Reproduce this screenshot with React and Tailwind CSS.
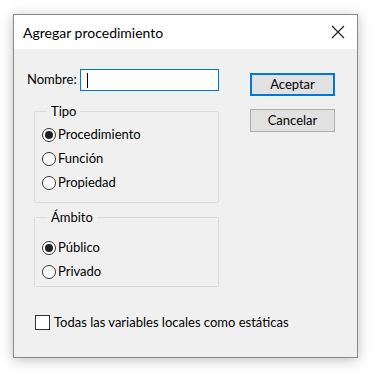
import React, { useState } from "react";

const font = { fontFamily: 'Lato, "Open Sans", sans-serif' };

function Radio({ label, checked, onSelect }) {
  return (
    <label className="flex items-center h-[24px] cursor-default" onClick={onSelect}>
      <span className="w-[14px] h-[14px] rounded-full border border-[#333] bg-white flex items-center justify-center">
        {checked && <span className="w-[8px] h-[8px] rounded-full bg-[#222]" />}
      </span>
      <span className="ml-[2px]">{label}</span>
    </label>
  );
}

function Group({ title, children, className }) {
  return (
    <fieldset className={"border border-[#dcdcdc] rounded-[2px] w-[185px] pl-[7px] " + className}>
      <legend className="ml-[5px] px-[4px] leading-[16px]">{title}</legend>
      {children}
    </fieldset>
  );
}

export default function App() {
  const [tipo, setTipo] = useState("proc");
  const [ambito, setAmbito] = useState("pub");
  const [name, setName] = useState("");

  return (
    <div className="w-[375px] h-[375px] bg-white pl-[13px] pt-[14px] text-[13px] text-black" style={font}>
      <div className="w-[345px] h-[344px] border border-[#8a8a8a] bg-[#f0f0f0] shadow-[0_2px_12px_rgba(0,0,0,0.25)] flex flex-col">
        <div className="h-[34px] bg-white flex items-center justify-between pl-[9px] pr-[10px]">
          <span className="text-[14px]">Agregar procedimiento</span>
          <svg width="14" height="14" viewBox="0 0 14 14" className="mr-[2px]">
            <path d="M1 1 L13 13 M13 1 L1 13" stroke="#222" strokeWidth="1.2" />
          </svg>
        </div>

        <div className="flex">
          <div className="flex flex-col w-[222px] pl-[13px]">
            <div className="flex items-center mt-[20px]">
              <span>Nombre:</span>
              <div className="ml-[3px] w-[139px] h-[22px] border border-[#0078d7] bg-white flex items-center pl-[6px]">
                {name === "" && <span className="w-[1px] h-[15px] bg-black shrink-0" />}
                <input
                  value={name}
                  onChange={(e) => setName(e.target.value)}
                  className="w-full outline-none bg-transparent"
                />
              </div>
            </div>

            <Group title="Tipo" className="ml-[7px] mt-[12px] h-[100px] pt-[4px]">
              <Radio label="Procedimiento" checked={tipo === "proc"} onSelect={() => setTipo("proc")} />
              <Radio label="Función" checked={tipo === "func"} onSelect={() => setTipo("func")} />
              <Radio label="Propiedad" checked={tipo === "prop"} onSelect={() => setTipo("prop")} />
            </Group>

            <Group title="Ámbito" className="ml-[7px] mt-[6px] h-[78px] pt-[11px]">
              <Radio label="Público" checked={ambito === "pub"} onSelect={() => setAmbito("pub")} />
              <Radio label="Privado" checked={ambito === "priv"} onSelect={() => setAmbito("priv")} />
            </Group>
          </div>

          <div className="flex flex-col ml-[14px] mt-[24px] gap-[13px]">
            <button className="w-[85px] h-[23px] border-2 border-[#0078d7] bg-[#e1e1e1]">Aceptar</button>
            <button className="w-[85px] h-[23px] border border-[#adadad] bg-[#e1e1e1]">Cancelar</button>
          </div>
        </div>

        <label className="flex items-center ml-[21px] mt-[26px] whitespace-nowrap">
          <span className="w-[15px] h-[15px] border border-[#333] bg-white" />
          <span className="ml-[4px]">Todas las variables locales como estáticas</span>
        </label>
      </div>
    </div>
  );
}
